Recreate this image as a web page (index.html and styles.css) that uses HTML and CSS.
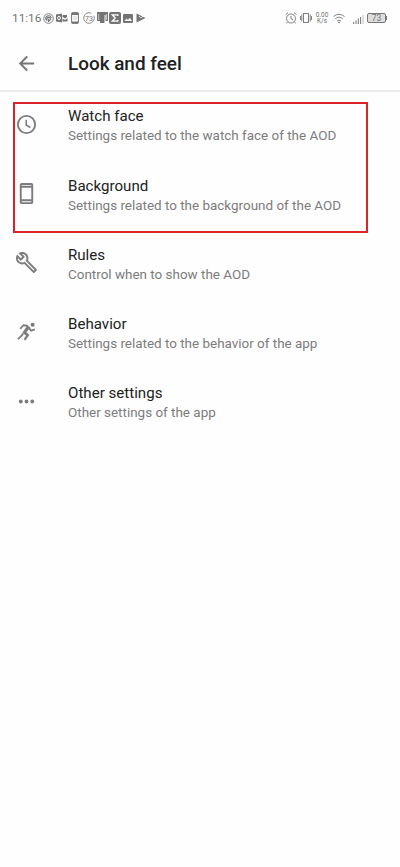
FILE: index.html
```html
<!DOCTYPE html>
<html lang="en">
<head>
<meta charset="utf-8">
<title>Look and feel</title>
<link rel="stylesheet" href="styles.css">
</head>
<body>
<header class="status">
  <span class="time">11:16</span>
  <div class="notifications">
    <svg width="11" height="11" viewBox="0 0 11 11" fill="none" stroke="currentColor"><circle cx="5.5" cy="5.5" r="4.8" stroke-width=".9"/><path d="M3 7C2 4 4 2 7 3L8.500 5M4 8C3 5 5 3.500 7 5L8 7M5.500 9V6.500L7 8" stroke-width="1.100"/></svg>
    <svg width="12" height="10" viewBox="0 0 12 10"><path d="M0 1.500 6 .5v9L0 8.500zM6.500 2H11v2L9 5.500 6.500 4zM6.500 5.500 9 7l2.500-2v3.500h-5z" fill="currentColor"/><ellipse cx="3" cy="5" rx="1.300" ry="1.800" fill="none" stroke="#fff"/></svg>
    <svg width="8" height="12" viewBox="0 0 8 12"><rect x=".6" y=".6" width="6.800" height="10.800" rx=".6" fill="none" stroke="currentColor"/><path d="M1 1h6v2H1zM1 9.500h6V11H1z" fill="currentColor"/><path d="M2 5h4M2 7h4" stroke="currentColor" stroke-width=".6" opacity=".5"/></svg>
    <svg class="gauge" width="12" height="12" viewBox="0 0 12 12"><circle cx="6" cy="6" r="5.300" fill="none" stroke="currentColor" stroke-width=".8" stroke-dasharray="27 3"/><text x="6" y="8.500" text-anchor="middle">73</text></svg>
    <svg width="11" height="12" viewBox="0 0 11 12" fill="currentColor"><path d="M0 0h11v9H8.500V3h-1v8H3V9H0z"/><path d="M1.700 2v6M9.500 2v6" stroke="#fff" stroke-width=".6"/></svg>
    <svg width="12" height="12" viewBox="0 0 12 12"><rect width="12" height="12" rx="2" fill="currentColor"/><path d="M8.800 4V2.800H3.300L6.200 6 3.300 9.200h5.500V8" fill="none" stroke="#fff" stroke-width="1.300"/></svg>
    <svg width="10" height="9" viewBox="0 0 10 9"><rect width="10" height="9" rx="1" fill="currentColor"/><path d="m1.500 7 2-2.500L5 6l1.800-2.300L9 7z" fill="#fff"/></svg>
    <svg class="play" width="10" height="10" viewBox="0 0 10 10"><path d="M.5 .5 9.500 5 .5 9.500z" fill="currentColor"/><path d="m3 3 1.700 2L9 2" fill="none" stroke="#fff" stroke-width=".8"/></svg>
  </div>
  <div class="system">
    <svg width="12" height="12" viewBox="0 0 12 12" fill="none" stroke="currentColor" stroke-width=".9"><circle cx="6" cy="6.500" r="4.500"/><path d="M6 4v2.700l2 1M.6 2.700 3 .7M9 .7l2.400 2M2.500 10l-1 1.400M9.500 10l1 1.400"/></svg>
    <svg width="12" height="12" viewBox="0 0 12 12" fill="none" stroke="currentColor" stroke-width=".9"><rect x="3.500" y="1.500" width="5" height="9"/><path d="M1.800 2.500v7M10.200 2.500v7M.5 4v4M11.500 4v4"/></svg>
    <span class="speed"><span>0.00</span><span>K/s</span></span>
    <svg class="wifi" width="12" height="11" viewBox="0 0 12 11" fill="none" stroke="currentColor" stroke-width=".9"><path d="M.5 3.500Q6-1 11.500 3.500M2.300 5.700Q6 2.700 9.700 5.700M4 8Q6 6.300 8 8"/><circle cx="6" cy="9.500" r=".5" fill="currentColor"/></svg>
    <svg class="signal" width="11" height="9" viewBox="0 0 11 9" stroke="currentColor" stroke-width="1"><path d="M.7 9V7M3 9V5.500M5.300 9V3.500M7.600 9V2"/><path d="M10 9V0" opacity=".45"/></svg>
    <span class="battery"><b>73</b></span>
  </div>
</header>
<div class="appbar">
  <svg width="23" height="23" viewBox="0 0 24 24" fill="currentColor"><path d="M20 11H7.830l5.590-5.590L12 4l-8 8 8 8 1.410-1.410L7.830 13H20z"/></svg>
  <h1>Look and feel</h1>
</div>
<main class="list">
  <section class="highlighted">
    <div class="row">
      <svg width="23" height="23" viewBox="0 0 24 24" fill="none" stroke="currentColor"><circle cx="12" cy="12" r="9" stroke-width="1.900"/><path d="M11.700 7v5.500l4.300 2.600" stroke-width="1.600"/></svg>
      <div class="text"><h2>Watch face</h2><p>Settings related to the watch face of the AOD</p></div>
    </div>
    <div class="row">
      <svg width="23" height="23" viewBox="0 0 24 24" fill="currentColor"><path d="M17 1.010 7 1c-1.100 0-1.990.9-1.990 2v18c0 1.100.89 2 1.990 2h10c1.100 0 2-.9 2-2V3c0-1.100-.9-1.990-2-1.990zM17 21H7v-1h10v1zm0-3H7V6h10v12zm0-14H7V3h10v1z"/></svg>
      <div class="text"><h2>Background</h2><p>Settings related to the background of the AOD</p></div>
    </div>
  </section>
  <div class="row">
    <svg width="23" height="23" viewBox="0 0 24 24" fill="currentColor"><path d="M22.610 18.990l-9.080-9.080c.93-2.340.45-5.100-1.440-7C9.790.61 6.210.4 3.660 2.260L7.500 6.110 6.080 7.520 2.250 3.690C.39 6.230.6 9.820 2.900 12.110c1.860 1.860 4.570 2.350 6.890 1.480l9.110 9.110c.39.39 1.020.39 1.410 0l2.300-2.300c.4-.38.4-1.010 0-1.410zm-3 1.600l-9.460-9.460c-.61.45-1.290.72-2 .82-1.360.2-2.790-.21-3.830-1.250C3.370 9.760 2.930 8.500 3 7.260l3.090 3.090 4.240-4.240-3.090-3.090c1.240-.07 2.490.37 3.440 1.310 1.080 1.080 1.490 2.570 1.240 3.960-.12.71-.42 1.370-.88 1.960l9.450 9.450-.88.89z"/></svg>
    <div class="text"><h2>Rules</h2><p>Control when to show the AOD</p></div>
  </div>
  <div class="row">
    <svg width="23" height="23" viewBox="0 0 24 24" fill="none" stroke="currentColor" stroke-linejoin="round"><circle cx="18.400" cy="5" r="2.100" fill="currentColor" stroke="none"/><path d="M5.500 9.200 8.700 5.500l5 .6" stroke-width="1.900"/><path d="M12 5.300 15.700 7.700l-3.900 5 3 2.800-3.900 5.700-1.700-1 2.500-4-3.800-3 4-5.800z" fill="currentColor" stroke-width=".4"/><path d="m14.300 8 2.500 3.200 4-1.300M8.500 14.200l-2.300 2.900-3.200 2.900" stroke-width="1.900"/></svg>
    <div class="text"><h2>Behavior</h2><p>Settings related to the behavior of the app</p></div>
  </div>
  <div class="row">
    <svg width="23" height="23" viewBox="0 0 24 24" fill="currentColor"><circle cx="6" cy="12" r="2"/><circle cx="12" cy="12" r="2"/><circle cx="18" cy="12" r="2"/></svg>
    <div class="text"><h2>Other settings</h2><p>Other settings of the app</p></div>
  </div>
</main>
</body>
</html>
```
FILE: styles.css
```css
*, *::after { box-sizing: border-box; }
body { margin: 0; min-height: 867px; background: #fefefe; color: #212121; font-family: Roboto, sans-serif; }
h1, h2, p { margin: 0; font-weight: 400; }
svg { display: block; flex: none; }
.status { display: flex; align-items: center; height: 36px; padding: 0 13px 0 12px; color: #747474; }
.time { width: 31px; font-size: 11.800px; white-space: nowrap; }
.notifications { display: flex; align-items: center; gap: 2px; }
.notifications svg:nth-child(3) { margin: 0 1.500px 0 1px; }
.notifications svg:nth-child(5) { margin-right: -1px; }
.notifications .play { margin-left: 1.500px; }
.gauge text { font-size: 7px; fill: currentColor; }
.system { display: flex; align-items: center; gap: 3px; margin-left: auto; }
.speed { display: flex; flex-direction: column; align-items: center; width: 14px; margin: 0 2px 0 0; font-size: 6.500px; line-height: 6.500px; }
.wifi { margin-left: -1px; }
.signal { margin: 3px 0 0 5px; }
.battery { position: relative; display: grid; place-items: center; width: 19px; height: 10px; margin-right: 1px; border: 1px solid #777; border-radius: 2px; background: #dedede; font-size: 8.500px; line-height: 8px; }
.battery::after { content: ""; position: absolute; right: -2px; top: 2px; width: 1px; height: 4px; background: #777; }
.battery b { font-weight: 400; }
.appbar { display: flex; align-items: center; gap: 30px; height: 56px; padding: 0 15px; border-bottom: 2px solid #ececec; color: #757575; }
.appbar h1 { padding-top: 1px; color: #212121; font-size: 18.900px; font-weight: 500; }
.list { padding-top: 10px; }
.highlighted { position: relative; }
.highlighted::after { content: ""; position: absolute; left: 13px; top: 0; width: 355px; height: 131px; border: 2px solid #dc2428; }
.row { display: flex; align-items: flex-start; gap: 30px; height: 69.300px; padding: 10.500px 15px 0; color: #7c7c7c; }
.text { margin-top: -5.300px; }
.row h2 { color: #212121; font-size: 15.100px; line-height: 19px; white-space: nowrap; }
.row p { font-size: 13.450px; line-height: 19px; white-space: nowrap; }
```
